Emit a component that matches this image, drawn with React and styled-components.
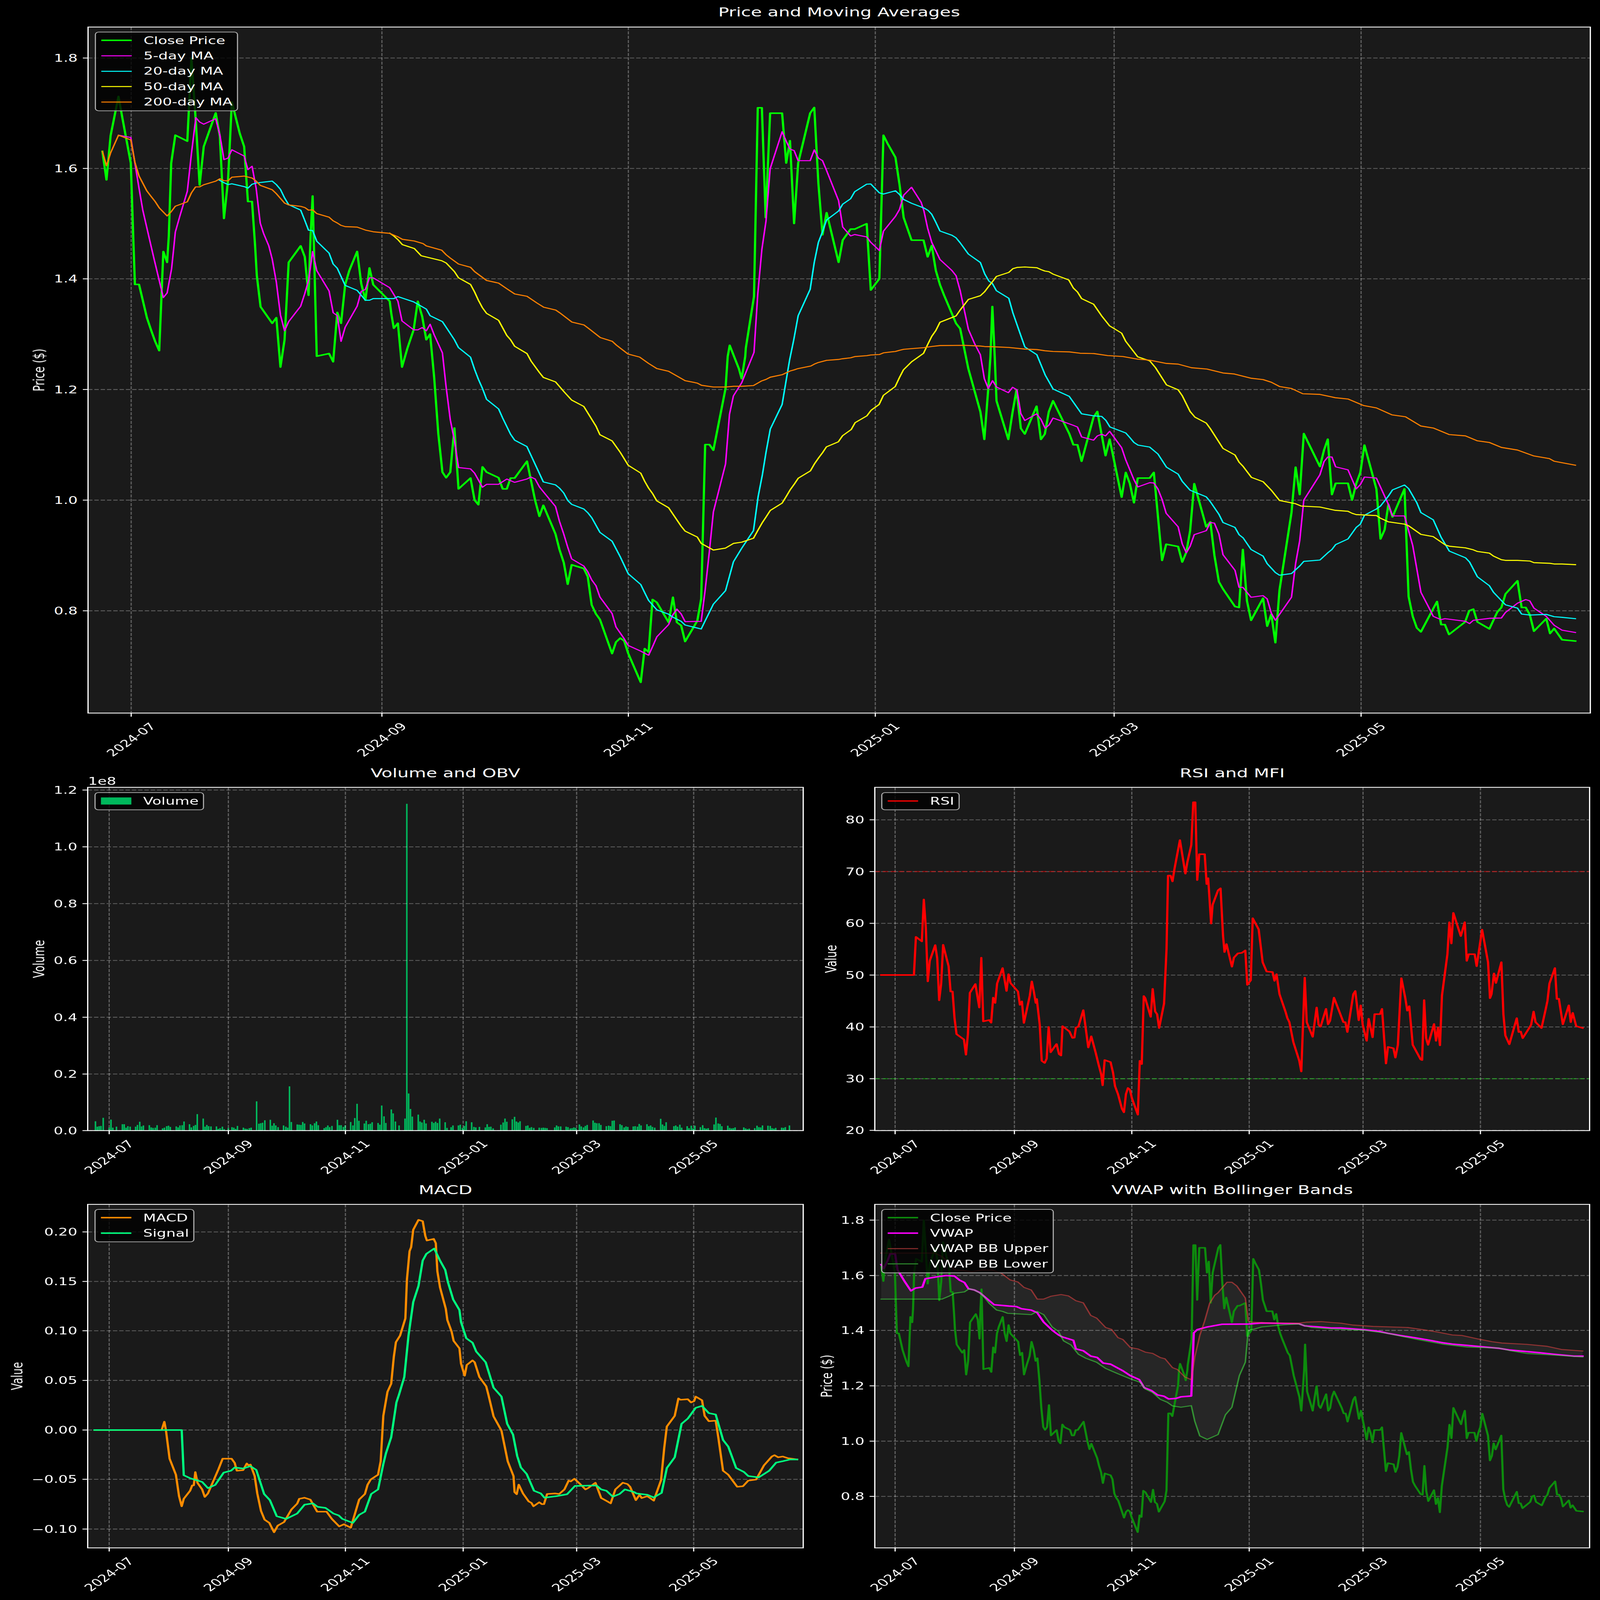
import React, { useLayoutEffect, useState } from "react";
import styled, { createGlobalStyle } from "styled-components";

const GlobalStyle = createGlobalStyle`
  html, body { margin: 0; padding: 0; background: #000; overflow: hidden; }
  body { font-family: "DejaVu Sans", "Liberation Sans", sans-serif; color: #fff; }
`;

const Frame = styled.div`
  width: 100vw;
  height: 100vh;
  overflow: hidden;
  background: #000;
`;
const Page = styled.div`
  width: 4470px;
  height: 6507px;
  display: flex;
  flex-direction: column;
  background: #000;
  transform-origin: 0 0;
`;
const LowerGrid = styled.div`
  display: grid;
  grid-template-columns: 2235px 2235px;
  grid-template-rows: 1700px 1717px;
`;
const Panel = styled.section`
  display: flex;
  flex-direction: column;
  height: ${(p) => p.$height}px;
`;
const Title = styled.h2`
  margin: 0;
  height: ${(p) => p.$height}px;
  line-height: ${(p) => p.$height}px;
  padding-left: ${(p) => p.$shift}px;
  text-align: center;
  font-size: 50px;
  font-weight: 400;
  color: #fff;
  white-space: nowrap;
`;
const Plot = styled.div`
  position: relative;
  flex: 1;
`;
const ChartSvg = styled.svg`
  display: block;
  overflow: visible;
  width: 100%;
  height: 100%;
`;
const AxesFace = styled.rect`
  fill: #1a1a1a;
`;
const AxesFrame = styled.rect`
  fill: none;
  stroke: #fff;
  stroke-width: 3.4;
`;
const GridLine = styled.line`
  stroke: rgba(255, 255, 255, 0.3);
  stroke-width: 3.3;
  stroke-dasharray: 12.3 5.3;
`;
const RefLine = styled.line`
  stroke: ${(p) => p.$color};
  stroke-width: 4.2;
  stroke-dasharray: 15.4 6.7;
`;
const Tick = styled.line`
  stroke: #fff;
  stroke-width: 3.3;
`;
const AxisText = styled.text`
  fill: #fff;
  font-size: 41.67px;
  font-family: "DejaVu Sans", sans-serif;
`;
const Series = styled.polyline`
  fill: none;
  stroke: ${(p) => p.$color};
  stroke-width: ${(p) => p.$width};
  stroke-linejoin: round;
  stroke-linecap: square;
`;
const Band = styled.polygon`
  fill: rgba(255, 255, 255, 0.055);
`;
const VolumeBar = styled.rect`
  fill: #00b85c;
`;
const Legend = styled.div`
  position: absolute;
  left: ${(p) => p.$left}px;
  top: ${(p) => p.$top}px;
  box-sizing: border-box;
  padding: 1px 12px 3px 15px;
  background: rgba(0, 0, 0, 0.8);
  border: 3.4px solid #b3b3b3;
  border-radius: 11px;
`;
const LegendRow = styled.div`
  display: flex;
  align-items: center;
  height: 62.7px;
  gap: 33px;
`;
const LineKey = styled.span`
  width: 85px;
  height: ${(p) => p.$weight}px;
  background: ${(p) => p.$color};
  flex: none;
`;
const PatchKey = styled.span`
  width: 85px;
  height: 29px;
  background: #00b85c;
  flex: none;
`;
const LegendLabel = styled.span`
  font-size: 41.67px;
  line-height: 1;
  color: #fff;
  white-space: nowrap;
`;

/* Trace helper: each traced run is given in the coordinates of a magnified view */
const tiles = {
  A: [0, 0, 1.0453, 1.568],
  B: [1500, 0, 1.0453, 1.0453],
  C: [2970, 1000, 1.0453, 0.7467],
  D: [0, 1000, 1.0453, 0.7467],
  E: [1450, 1450, 1, 1],
  R: [2300, 3100, 0.7226, 0.9224],
  M: [0, 4800, 0.6817, 0.9186],
  V: [2300, 4800, 0.7226, 0.9186],
  W: [245, 4400, 0.784, 3],
};
const trace = (...runs) =>
  runs.flatMap(([tile, text]) => {
    const [ox, oy, sx, sy] = tiles[tile];
    return text
      .trim()
      .split(/\s+/)
      .map((pair) => {
        const [x, y] = pair.split(",").map(Number);
        return [ox + x / sx, oy + y / sy];
      });
  });
const toPoints = (list) => list.map(([x, y]) => `${x.toFixed(1)},${y.toFixed(1)}`).join(" ");

const close = trace(
  ["A", "299,965 311,1147 323,865 346,615 358,760 382,1040 390,1568"],
  ["D", "394,117 406,117 429,218 441,255 453,290 465,318 477,17 488,50 493,-30"],
  ["A", "500,1040 512,862 547,900 559,370 572,780 583,1180 595,935 630,720 642,870 654,1393 666,1150 677,650 700,850 713,935 724,1285 736,1285 745,1568"],
  ["D", "750,90 761,185 795,235 807,218 819,368 831,285 843,50 878,0 890,33 901,150 907,-30"],
  ["A", "913,1250"],
  ["D", "925,335 961,327 973,352 985,202 996,235 1008,118 1020,75 1043,17 1055,115 1067,165 1079,67 1090,118 1138,168 1143,208 1150,250 1162,235 1174,368 1190,310 1208,255 1220,168 1233,215 1245,285 1256,268 1268,400 1280,570 1292,687 1303,704 1315,687 1327,553 1339,738 1374,705 1386,772 1397,786 1409,671 1421,687 1456,704 1468,738 1480,738 1491,705 1503,705 1539,654"],
  ["E", "45,585 57,650 68,605 102,722 113,785 125,838 136,926 147,847 181,862 192,895 203,1010 215,1047 226,1069 260,1208 271,1161 283,1145 294,1157 305,1207 340,1325 351,1188 362,1202 373,988 385,1000 418,1081 430,979 441,1081 453,1094 464,1159 498,1075 509,985 520,358 532,358 543,381 577,130 583,0"],
  ["B", "563,1468 590,1568"],
  ["E", "622,90 632,0"],
  ["B", "610,1480 634,1260 645,458 657,458 668,925 681,481 716,481 728,693 739,598 751,950 763,693 798,481 810,457 822,780 834,998 846,904 881,1115 893,1021 916,974 928,974 963,951 975,1233 1000,1185 1012,575 1024,610 1047,669 1059,785 1071,925 1094,1021 1129,1021 1141,1092 1153,1044 1165,1150 1177,1210 1189,1255 1224,1375 1236,1397 1260,1568"],
  ["E", "1289,225 1300,337 1311,130 1317,0"],
  ["B", "1330,1303"],
  ["E", "1329,0 1334,180 1367,337 1379,225 1390,135 1402,292 1413,315 1446,202 1458,337 1469,315 1480,225 1492,180"],
  ["C", "18,570 30,604 42,604 54,654 89,520 100,503 124,637 136,587 171,763 183,688 195,722 207,780 218,705 253,705 265,688 289,955 301,906 336,913 348,960 360,930 371,865 383,722 418,853 430,838 442,940 455,1020 467,1042 502,1095 514,1098 525,922 537,1078 549,1137 584,1070 596,1155 608,1118 620,1205 632,1045 667,810 679,672 691,755 703,570 750,670 762,620 773,587 785,755 796,721 832,721 844,772 856,722 868,688 880,605 915,738 927,890 939,862 950,785 962,823 997,738 1009,1065 1021,1125 1033,1160 1045,1172 1092,1080 1104,1150 1115,1150 1127,1180 1174,1142 1186,1108 1198,1103 1210,1142 1245,1163 1268,1112 1280,1098 1292,1057 1327,1017 1339,1098 1351,1098 1363,1120 1375,1170 1411,1132 1422,1177 1434,1162 1457,1196 1496,1200"]
);

const ma5 = trace(
  ["A", "346,862 382,877 394,1040 406,1200 417,1340 441,1568"],
  ["D", "450,40 477,157 488,143 501,70 508,0"],
  ["A", "512,1480 525,1380 547,1220 559,980 572,750 583,778 595,792 630,757 642,860 654,1018 666,1008 677,955 713,995 724,1082 736,1060 748,1200 760,1423 770,1490 785,1568"],
  ["D", "795,40 807,110 819,210 831,258 843,230 878,183 890,145 901,105 913,17 925,75 961,137 973,203 985,212 996,290 1008,247 1020,225 1043,183 1055,138 1067,132 1079,97 1090,97 1138,127 1162,168 1174,228 1208,255 1220,255 1233,248 1245,258 1256,238 1268,270 1292,325 1303,430 1315,528 1327,590 1339,673 1374,677 1386,690 1409,733 1421,724 1456,724 1480,708 1503,718"],
  ["E", "22,498 33,490 45,498 57,530 68,550 102,610 113,670 125,722 136,775 147,823 181,852 192,875 203,908 215,932 226,978 260,1045 271,1100 283,1125 294,1148 305,1175 340,1198 362,1215 373,1180 385,1140 418,1090 430,1050 441,1027 453,1047 464,1078 509,1077 520,950 532,790 543,632 577,437 588,235 599,160 622,107"],
  ["B", "634,1498 645,1250 657,1060 669,940 681,718 716,560 728,600 739,634 751,640 763,683 798,683 810,637 822,672 834,683 846,725 881,853 893,965 916,1003 928,997 963,1007 975,1030 1000,1065 1012,983 1047,920 1059,890 1071,830 1094,796 1122,860 1130,895 1141,970 1153,1030 1177,1103 1212,1150 1224,1172 1236,1235 1260,1400 1278,1460 1295,1508"],
  ["E", "1300,90 1311,130 1323,98 1334,124 1367,147 1379,125 1391,135 1402,232 1413,260 1446,233 1458,255 1470,292 1481,278 1492,250"],
  ["C", "30,545 42,550 54,580 89,590 100,577 113,572 124,577 136,563 171,613 183,650 207,710 218,732 253,719 265,720 277,738 289,770 301,812 336,853 348,905 360,932 371,912 383,877 418,865 430,840 442,842 455,875 467,938 502,985 514,1037 525,1037 549,1067 584,1062 596,1072 608,1115 620,1137 667,1067 679,965 691,895 703,772 750,695 762,655 773,641 785,641 796,671 832,680 856,738 868,725 880,702 915,705 950,785 962,820 997,820 1021,910 1045,1052 1069,1100 1081,1125 1104,1135 1115,1132 1175,1140 1187,1147 1198,1137 1245,1131 1280,1130 1292,1113 1327,1085 1351,1074 1363,1078 1375,1100 1411,1125 1434,1152 1457,1167 1496,1174"]
);

const ma20 = trace(
  ["A", "640,1148 654,1165 666,1177 677,1172 713,1190 724,1200 736,1175 748,1167 795,1155 807,1177 819,1208 831,1262 843,1305 878,1340 890,1405 901,1468 913,1470 925,1538"],
  ["D", "961,22 973,55 985,68 1008,120 1043,135 1067,165 1079,165 1090,160 1150,160 1162,154 1208,170 1245,192 1256,212 1292,230 1327,285 1339,309 1374,338 1386,375 1397,405 1409,433 1421,466 1456,495 1468,523 1491,572 1503,590"],
  ["E", "22,366 68,510 102,522 113,535 125,555 136,585 147,601 181,620 192,635 203,655 226,715 260,751 283,815 305,883 340,927 351,960 362,992 385,1030 418,1048 430,1060 453,1077 464,1092 509,1108 520,1075 543,1007 577,952 599,835 622,780 655,708 668,570 680,480 690,390 702,295 735,195"],
  ["B", "738,1530 750,1445 763,1342 773,1310 798,1230 810,1115 822,1030 834,985 846,935 881,897 893,868 916,845 928,815 963,783 975,782 1000,820 1012,825 1047,811 1059,827 1071,848 1094,864 1130,884 1142,894 1153,911 1165,945 1177,982 1212,1000 1224,1011 1236,1032 1260,1080 1295,1116 1308,1165 1320,1195 1330,1205 1342,1236 1378,1268 1390,1330 1402,1380 1414,1430 1425,1475 1460,1508"],
  ["E", "1470,75 1492,132"],
  ["C", "18,457 54,510 89,516 113,518 125,530 137,550 183,568 195,582 207,597 219,605 253,611 277,632 302,672 336,693 348,715 371,742 418,762 430,777 455,815 467,840 502,855 514,877 526,887 549,922 584,942 596,965 620,992 632,1000 667,995 691,972 703,958 750,954 773,932 785,922 796,907 832,890 856,855 868,845 880,818 915,799 927,790 950,760 962,741 997,726 1009,737 1033,780 1045,810 1081,832 1104,885 1128,927 1175,947 1187,960 1210,1005 1245,1032 1257,1052 1292,1090 1327,1100 1339,1118 1363,1121 1411,1119 1434,1126 1457,1128 1496,1132"]
);

const ma50 = trace(
  ["A", "1138,1487 1150,1505 1162,1528 1175,1560"],
  ["D", "1210,8 1230,30 1290,45 1303,52 1327,78 1339,97 1374,117 1386,140 1397,165 1409,188 1421,205 1456,226 1480,272 1491,285 1503,305 1539,327 1551,350"],
  ["E", "57,65 68,85 102,103 125,142 147,177 181,203 215,283 226,318 260,343 283,390 305,442 340,474 351,507 362,535 373,557 385,587 418,615 453,690 464,710 498,734 509,760 543,787 577,779 599,760 622,755 655,739 668,705 679,677 690,653 702,626 735,596 747,568 758,541 769,519 780,495 814,465 826,435 837,412 848,391 859,367 892,347 904,322 928,297 939,269 972,241 984,218 1006,195 1018,158 1051,122 1063,85 1074,54 1097,21"],
  ["B", "1129,1502 1141,1465 1153,1430 1165,1405 1177,1370 1224,1343 1236,1318 1260,1273 1295,1257 1307,1241 1318,1220 1330,1198 1342,1175 1378,1158 1390,1142 1402,1137 1425,1135 1460,1138 1472,1146 1483,1152 1495,1155 1507,1165 1553,1190"],
  ["C", "30,128 42,140 54,160 89,177 113,213 136,243 171,265 183,290 218,337 253,349 270,370 302,422 336,437 348,455 371,503 385,520 418,538 430,555 467,615 502,635 514,657 526,670 550,703 584,716 608,742 632,773 679,783 695,790 750,793 795,803 832,806 844,812 856,816 915,819 927,827 950,838 997,845 1009,850 1045,876 1081,883 1116,908 1128,912 1175,917 1198,923 1210,928 1245,933 1257,942 1280,953 1292,955 1327,955 1363,957 1375,962 1422,964 1434,966 1457,966 1496,968"]
);

const ma200 = trace(
  ["A", "299,965 311,1057 323,975 346,862 382,892 394,1035 406,1122 429,1218 441,1252 453,1285 465,1325 488,1377 500,1350 512,1315 547,1287 559,1230 571,1192 583,1192 595,1178 630,1155 642,1140 654,1152 666,1153 677,1130 713,1123 736,1135 748,1155 760,1182 795,1210 807,1235 819,1265 831,1295 843,1307 878,1316 890,1323 901,1340 913,1338 925,1362 961,1385 973,1408 985,1422 996,1437 1008,1445 1043,1448 1067,1467 1090,1478 1138,1488 1162,1510 1175,1526 1210,1537 1235,1553"],
  ["D", "1245,0 1290,13 1303,27 1315,37 1339,55 1374,65 1386,78 1421,105 1456,113 1480,130 1503,146 1539,153"],
  ["B", "0,1288 20,1306 55,1318 67,1330 102,1369 137,1381 150,1395 172,1420 185,1435 220,1451 232,1467 266,1505 300,1518"],
  ["E", "362,28 385,49 418,60 430,70 464,98 498,108 510,117 543,124 577,124 600,121 622,121 655,118 678,99 690,93 702,84 735,74 757,59 769,54"],
  ["B", "762,1567 800,1556 810,1548 822,1541 846,1532 881,1528 893,1525 916,1521 928,1516 963,1512 975,1509 1000,1507 1012,1500 1047,1494 1059,1489 1071,1485 1094,1482 1130,1478 1153,1473 1177,1469 1248,1468 1295,1471 1307,1473 1330,1474 1378,1477 1425,1484 1460,1486 1483,1491 1507,1494 1555,1496"],
  ["C", "50,326 90,327 130,333 175,336 218,344 253,347 302,357 336,359 375,370 420,374 467,386 500,389 550,402 584,406 608,414 632,427 667,433 700,449 750,451 795,461 832,465 878,485 915,492 960,513 1000,519 1045,547 1081,553 1128,573 1175,577 1210,592 1245,597 1280,612 1327,620 1375,638 1420,646 1434,654 1496,666"]
);

const rsi = trace([
  "R",
  "117,798 183,798 187,655 199,672 203,515 207,620 211,822 215,745 226,686 230,735 234,893 238,830 242,685 253,765 257,860 261,860 265,960 269,1020 284,1040 288,1097 292,1020 296,865 307,832 315,920 319,733 323,972 335,967 339,977 343,883 347,903 351,830 362,772 370,858 374,795 378,828 393,860 397,910 401,897 405,978 417,875 421,822 425,860 429,903 431,888 437,985 441,1120 447,1128 451,1112 455,993 459,1088 471,1057 476,1095 480,1100 483,990 497,1010 503,1034 507,1033 510,995 515,992 525,930 535,1070 541,1028 550,1090 556,1135 561,1170 564,1212 568,1117 580,1125 585,1165 589,1215 595,1245 603,1300 607,1313 611,1245 615,1222 619,1228 623,1260 635,1322 639,1120 643,1132 647,877 650,885 661,955 665,850 670,935 674,945 678,997 688,905 693,700 696,425 701,425 705,447 709,400 720,292 731,418 735,375 743,310 747,150 751,150 755,442 759,345 770,345 774,457 777,435 783,605 786,535 797,480 802,473 807,650 810,712 814,682 825,767 829,733 837,717 845,715 852,706 856,835 863,818 867,585 879,627 887,750 895,785 907,787 911,820 915,795 921,870 933,935 937,960 941,975 949,1050 961,1120 965,1160 972,808 976,975 988,1030 996,920 1000,985 1004,992 1015,925 1019,983 1023,970 1031,883 1050,975 1054,975 1058,1012 1070,870 1074,858 1081,968 1085,912 1089,985 1097,1045 1101,962 1109,1032 1113,945 1124,945 1128,925 1132,1030 1136,1130 1140,1068 1151,1073 1155,1108 1160,1060 1167,810 1175,885 1179,932 1183,915 1190,1060 1206,1115 1209,1117 1213,892 1217,1035 1221,1060 1233,982 1237,1045 1241,995 1245,1062 1249,875 1260,720 1264,600 1268,680 1272,565 1287,652 1295,600 1299,745 1303,720 1315,720 1319,765 1330,628 1342,750 1346,885 1349,870 1354,792 1358,828 1369,750 1373,945 1377,1025 1385,1058 1400,960 1404,1012 1408,1010 1412,1035 1424,1000 1429,985 1434,935 1438,975 1450,997 1458,930 1462,895 1466,830 1477,772 1481,888 1485,887 1493,983 1505,912 1509,975 1513,940 1520,990 1533,997",
]);

const macd = trace([
  "M",
  "180,933 308,933 313,902 316,933 323,1040 335,1100 341,1180 346,1218 350,1190 362,1160 366,1140 369,1140 372,1090 376,1130 385,1155 390,1183 396,1170 416,1080 424,1040 441,1040 447,1056 451,1085 463,1083 470,1058 473,1065 477,1062 485,1105 490,1170 497,1235 504,1268 513,1280 522,1315 529,1290 541,1277 555,1230 566,1208 570,1190 575,1188 580,1186 591,1193 604,1238 622,1238 632,1265 646,1293 655,1285 668,1298 684,1193 695,1172 700,1138 706,1118 720,1100 725,1050 730,880 738,790 745,760 750,660 754,605 762,580 772,516 775,370 780,265 783,250 787,185 797,148 805,153 810,208 813,225 826,219 830,235 833,340 838,400 849,480 852,522 860,565 864,600 875,628 878,685 885,730 889,690 900,673 904,680 913,735 926,770 930,800 940,882 955,935 967,1050 978,1105 980,1165 984,1173 988,1137 996,1170 1007,1200 1012,1205 1016,1218 1027,1203 1032,1210 1036,1210 1042,1172 1057,1170 1065,1172 1075,1155 1083,1122 1087,1125 1094,1115 1105,1135 1115,1155 1120,1150 1134,1130 1145,1187 1157,1200 1163,1207 1172,1155 1186,1130 1195,1135 1200,1145 1211,1195 1218,1175 1222,1187 1233,1180 1245,1197 1259,1120 1265,1000 1270,920 1285,880 1292,815 1296,820 1310,818 1316,830 1322,825 1325,808 1337,822 1342,880 1350,900 1363,898 1368,960 1377,1085 1387,1100 1404,1145 1415,1143 1425,1122 1440,1118 1455,1065 1470,1032 1475,1027 1482,1035 1491,1032 1500,1038 1518,1043",
]);
const signal = trace([
  "M",
  "180,933 346,933 350,1102 362,1113 370,1118 385,1127 396,1150 410,1138 426,1092 440,1085 447,1073 463,1077 477,1068 488,1082 503,1172 514,1195 527,1255 545,1265 566,1245 580,1212 596,1207 605,1220 620,1224 635,1245 645,1252 652,1265 672,1280 684,1250 695,1238 707,1172 720,1155 730,1060 735,1020 745,960 755,830 760,800 770,735 778,580 787,455 797,395 805,300 812,275 827,255 838,300 848,335 853,380 863,445 875,485 878,530 888,590 900,607 907,640 925,680 940,775 955,808 966,910 977,950 985,1030 992,1073 1003,1097 1017,1160 1030,1170 1037,1186 1060,1180 1080,1173 1095,1142 1115,1141 1136,1140 1145,1155 1155,1160 1167,1182 1180,1172 1190,1155 1208,1165 1212,1170 1233,1175 1245,1185 1260,1168 1270,1075 1285,1035 1298,910 1310,890 1325,850 1337,843 1350,870 1363,875 1377,970 1387,995 1402,1075 1417,1090 1425,1105 1445,1110 1465,1085 1478,1055 1490,1050 1505,1043 1518,1043",
]);

const vwap = trace([
  "V",
  "117,315 122,330 130,300 135,275 145,275 150,335 165,380 177,413 186,403 200,399 206,368 232,360 248,356 265,358 275,373 285,382 293,405 305,410 316,420 345,465 375,470 390,472 400,480 420,485 432,495 445,530 462,560 475,578 482,585 505,598 510,630 525,637 540,657 553,662 565,683 580,687 605,712 620,730 638,745 648,775 662,785 675,802 688,807 697,817 712,815 722,809 743,806 748,570 755,558 775,548 790,543 805,538 860,537 885,533 960,536 972,544 1000,548 1025,552 1045,552 1090,558 1120,564 1140,572 1165,580 1200,590 1225,598 1250,607 1270,612 1300,617 1330,622 1365,628 1385,634 1420,640 1450,645 1475,650 1515,657 1533,657",
]);
const bbUpper = trace([
  "V",
  "117,272 225,272 240,285 255,310 265,335 285,338 300,342 320,335 340,335 360,348 377,372 393,380 405,400 420,410 432,444 445,444 460,433 480,427 495,432 510,450 525,458 540,505 552,515 570,550 582,557 595,588 605,595 620,625 635,630 650,642 665,647 680,662 690,667 705,700 715,707 730,735 743,745 750,660 760,580 770,525 780,460 790,430 797,420 815,381 825,381 835,395 852,440 858,525 865,530 900,533 960,534 975,530 1005,528 1030,532 1045,534 1070,541 1110,546 1180,550 1210,558 1240,567 1270,578 1290,580 1320,592 1350,603 1370,608 1420,613 1460,620 1490,632 1533,638",
]);
const bbLower = trace([
  "V",
  "117,444 240,444 255,432 265,422 285,417 295,405 305,410 320,425 335,460 350,485 362,490 372,497 420,502 432,490 445,502 462,548 475,565 485,600 500,615 515,650 530,665 552,680 570,703 595,723 620,742 640,755 650,780 665,793 680,818 695,830 705,843 722,848 743,842 750,900 760,955 775,968 797,950 812,876 825,848 840,730 852,680 858,560 870,556 885,548 930,540 960,537 985,550 1025,555 1090,560 1140,572 1165,582 1200,595 1250,612 1300,623 1365,627 1385,636 1420,647 1475,653 1533,660",
]);
/* close price re-plotted on the VWAP axes */
const closeOnVwap = close.map(([x, y]) => [
  2500.7 + ((x - 366.5) / 11.3) * 5.38,
  6085.6 - ((2484 - y) * 1123.6) / 2249,
]);

/* traded-day volume bars, each as bar centre and top */
const volumes = trace([
  "W",
  "17,480 21,546 25,540 29,537 34,438 47,558 51,460 55,558 63,546 76,516 80,516 84,558 88,540 93,546 105,546 109,525 114,486 118,543 122,531 135,528 139,555 143,561 148,558 152,528 164,567 168,558 173,540 177,534 181,549 194,543 198,555 202,531 207,528 211,483 223,516 227,555 232,537 236,525 240,393 253,447 257,546 261,525 265,540 270,543 282,543 286,573 290,564 295,546 299,576 308,561 316,552 320,558 324,573 328,537 341,558 345,570 349,573 354,564 358,558 370,237 375,510 379,504 383,498 388,468 400,462 404,534 408,504 412,531 417,552 429,531 434,546 438,558 442,54 446,489 459,519 463,522 467,525 471,489 475,507 488,516 492,531 497,504 501,483 505,528 518,564 522,552 526,531 530,552 535,537 547,462 551,528 555,528 560,549 564,531 576,489 581,531 585,441 590,267 594,474 606,507 610,474 615,516 619,510 623,492 636,501 640,522 644,288 649,420 653,501 665,336 669,384 674,483 682,531 695,447 699,-3393 703,141 707,330 711,423 724,399 728,483 732,495 737,462 741,507 754,486 758,501 762,486 766,501 771,447 783,492 787,561 796,552 800,531 812,531 816,522 821,561 825,537 829,480 841,492 846,549 850,555 858,549 871,555 875,516 879,549 883,546 888,567 905,522 910,495 914,447 918,486 930,456 935,426 939,483 943,495 947,480 960,537 964,531 968,561 972,552 977,561 989,558 994,561 998,558 1002,561 1006,564 1023,555 1027,531 1031,543 1036,543 1048,546 1052,552 1057,567 1061,564 1065,555 1069,561 1077,519 1081,543 1086,555 1090,537 1094,525 1107,471 1111,498 1115,504 1120,504 1124,525 1136,540 1141,534 1145,540 1149,474 1153,471 1166,516 1170,528 1175,555 1179,543 1183,549 1195,543 1199,540 1204,546 1208,513 1212,531 1225,516 1229,540 1233,531 1237,549 1242,558 1255,450 1259,519 1263,537 1267,492 1284,540 1288,531 1292,546 1297,522 1301,558 1313,540 1317,564 1322,534 1326,567 1330,534 1342,552 1347,528 1351,564 1355,570 1359,564 1372,519 1376,435 1381,507 1385,513 1389,540 1402,534 1406,561 1410,567 1414,564 1418,555 1437,555 1441,567 1445,576 1449,570 1461,564 1466,534 1470,552 1474,555 1478,531 1490,534 1495,537 1499,564 1503,570 1507,561 1520,558 1524,561 1528,552 1537,531",
]);

const monthsMain = [366.5, 1067, 1755.5, 2445.4, 3112.6, 3802.5];
const monthsLeft = [305, 638, 965, 1294, 1611, 1938];
const monthsRight = [2500.7, 2834, 3162, 3490, 3808, 4136];
const monthNames = ["2024-07", "2024-09", "2024-11", "2025-01", "2025-03", "2025-05"];

const Axes = ({ box, months, yTicks, yLabel, labelDrop, children, backdrop }) => {
  const { l, t, r, b } = box;
  return (
    <>
      <AxesFace x={l} y={t} width={r - l} height={b - t} />
      {backdrop}
      {yTicks.map(([y]) => (
        <GridLine key={y} x1={l} x2={r} y1={y} y2={y} />
      ))}
      {months.map((x) => (
        <GridLine key={x} x1={x} x2={x} y1={t} y2={b} />
      ))}
      {children}
      <AxesFrame x={l} y={t} width={r - l} height={b - t} />
      {yTicks.map(([y, label]) => (
        <g key={label}>
          <Tick x1={l - 14.6} x2={l} y1={y} y2={y} />
          <AxisText x={l - 29} y={y + 15} textAnchor="end">
            {label}
          </AxisText>
        </g>
      ))}
      {months.map((x, i) => (
        <g key={x}>
          <Tick x1={x} x2={x} y1={b} y2={b + 14.6} />
          <AxisText
            x={x}
            y={b + labelDrop}
            textAnchor="middle"
            dominantBaseline="central"
            transform={`rotate(-45 ${x} ${b + labelDrop})`}
          >
            {monthNames[i]}
          </AxisText>
        </g>
      ))}
      <AxisText
        x={yLabel.x}
        y={(t + b) / 2}
        textAnchor="middle"
        dominantBaseline="central"
        transform={`rotate(-90 ${yLabel.x} ${(t + b) / 2})`}
      >
        {yLabel.text}
      </AxisText>
    </>
  );
};

const LegendBox = ({ left, top, items }) => (
  <Legend $left={left} $top={top}>
    {items.map((item) => (
      <LegendRow key={item.label}>
        {item.patch ? <PatchKey /> : <LineKey $color={item.color} $weight={item.weight} />}
        <LegendLabel>{item.label}</LegendLabel>
      </LegendRow>
    ))}
  </Legend>
);

const ChartPanel = ({ x, y, w, h, titleH, title, box, legend, children }) => (
  <Panel $height={h}>
    <Title $height={titleH} $shift={box.l + box.r - 2 * x - w}>
      {title}
    </Title>
    <Plot>
      <ChartSvg viewBox={`${x} ${y + titleH} ${w} ${h - titleH}`}>{children}</ChartSvg>
      {legend}
    </Plot>
  </Panel>
);

const mainBox = { l: 246, t: 110, r: 4443, b: 2900 };
const volBox = { l: 245, t: 3202, r: 2244, b: 4598 };
const rsiBox = { l: 2444, t: 3202, r: 4441, b: 4598 };
const macdBox = { l: 245, t: 4898, r: 2244, b: 6295 };
const vwapBox = { l: 2444, t: 4898, r: 4441, b: 6295 };

/* The page is drawn at the reference's own size and fitted to whatever window it gets */
const useFit = () => {
  const read = () => ({ x: window.innerWidth / 4470, y: window.innerHeight / 6507 });
  const [fit, setFit] = useState(read);
  useLayoutEffect(() => {
    const update = () => setFit(read());
    window.addEventListener("resize", update);
    return () => window.removeEventListener("resize", update);
  }, []);
  return fit;
};

export default function App() {
  const fit = useFit();
  return (
    <Frame>
      <GlobalStyle />
      <Page style={{ transform: `scale(${fit.x}, ${fit.y})` }}>
        <ChartPanel
          x={0}
          y={0}
          w={4470}
          h={3090}
          titleH={100}
          title="Price and Moving Averages"
          box={mainBox}
          legend={
            <LegendBox
              left={265}
              top={29}
              items={[
                { label: "Close Price", color: "#00ff00", weight: 6 },
                { label: "5-day MA", color: "#ff00ff", weight: 4 },
                { label: "20-day MA", color: "#00ffff", weight: 4 },
                { label: "50-day MA", color: "#ffff00", weight: 4 },
                { label: "200-day MA", color: "#ff8000", weight: 4 },
              ]}
            />
          }
        >
          <Axes
            box={mainBox}
            months={monthsMain}
            labelDrop={108}
            yLabel={{ x: 110, text: "Price ($)" }}
            yTicks={[[236, "1.8"], [685, "1.6"], [1134, "1.4"], [1584, "1.2"], [2034, "1.0"], [2484, "0.8"]]}
          >
            <Series points={toPoints(close)} $color="#00ff00" $width={6.2} />
            <Series points={toPoints(ma5)} $color="#ff00ff" $width={4.2} />
            <Series points={toPoints(ma20)} $color="#00ffff" $width={4.2} />
            <Series points={toPoints(ma50)} $color="#ffff00" $width={4.2} />
            <Series points={toPoints(ma200)} $color="#ff8000" $width={4.2} />
          </Axes>
        </ChartPanel>
        <LowerGrid>
          <ChartPanel
            x={0}
            y={3090}
            w={2235}
            h={1700}
            titleH={110}
            title="Volume and OBV"
            box={volBox}
            legend={<LegendBox left={264} top={22} items={[{ label: "Volume", patch: true }]} />}
          >
            <Axes
              box={volBox}
              months={monthsLeft}
              labelDrop={108}
              yLabel={{ x: 110, text: "Volume" }}
              yTicks={[[3213, "1.2"], [3444, "1.0"], [3675, "0.8"], [3906, "0.6"], [4137, "0.4"], [4368, "0.2"], [4598, "0.0"]]}
              backdrop={volumes.map(([x, y]) => (
                <VolumeBar key={x} x={x - 2.15} y={y} width={4.3} height={4598 - y} />
              ))}
            />
            <AxisText x={246} y={3191}>
              1e8
            </AxisText>
          </ChartPanel>
          <ChartPanel
            x={2235}
            y={3090}
            w={2235}
            h={1700}
            titleH={110}
            title="RSI and MFI"
            box={rsiBox}
            legend={<LegendBox left={227} top={22} items={[{ label: "RSI", color: "#ff0000", weight: 5 }]} />}
          >
            <Axes
              box={rsiBox}
              months={monthsRight}
              labelDrop={108}
              yLabel={{ x: 2322, text: "Value" }}
              yTicks={[[3334, "80"], [3544.5, "70"], [3755, "60"], [3965.5, "50"], [4176.5, "40"], [4387, "30"], [4597, "20"]]}
            >
              <RefLine x1={rsiBox.l} x2={rsiBox.r} y1={3544.5} y2={3544.5} $color="rgba(255,0,0,0.5)" />
              <RefLine x1={rsiBox.l} x2={rsiBox.r} y1={4387} y2={4387} $color="rgba(0,255,0,0.4)" />
              <Series points={toPoints(rsi)} $color="#ff0000" $width={6.2} />
            </Axes>
          </ChartPanel>
          <ChartPanel
            x={0}
            y={4790}
            w={2235}
            h={1717}
            titleH={100}
            title="MACD"
            box={macdBox}
            legend={
              <LegendBox
                left={264}
                top={27}
                items={[
                  { label: "MACD", color: "#ff8c00", weight: 6 },
                  { label: "Signal", color: "#00ff7f", weight: 6 },
                ]}
              />
            }
          >
            <Axes
              box={macdBox}
              months={monthsLeft}
              labelDrop={108}
              yLabel={{ x: 48, text: "Value" }}
              yTicks={[[5010, "0.20"], [5211.5, "0.15"], [5412, "0.10"], [5614, "0.05"], [5815.7, "0.00"], [6016, "\u22120.05"], [6218.5, "\u22120.10"]]}
            >
              <Series points={toPoints(macd)} $color="#ff8c00" $width={6.2} />
              <Series points={toPoints(signal)} $color="#00ff7f" $width={6.2} />
            </Axes>
          </ChartPanel>
          <ChartPanel
            x={2235}
            y={4790}
            w={2235}
            h={1717}
            titleH={100}
            title="VWAP with Bollinger Bands"
            box={vwapBox}
            legend={
              <LegendBox
                left={227}
                top={27}
                items={[
                  { label: "Close Price", color: "#0d8c0d", weight: 6 },
                  { label: "VWAP", color: "#ff00ff", weight: 6 },
                  { label: "VWAP BB Upper", color: "#8c2e2e", weight: 4 },
                  { label: "VWAP BB Lower", color: "#2e8c2e", weight: 4 },
                ]}
              />
            }
          >
            <Axes
              box={vwapBox}
              months={monthsRight}
              labelDrop={108}
              yLabel={{ x: 2310, text: "Price ($)" }}
              yTicks={[[4962, "1.8"], [5187.5, "1.6"], [5410.7, "1.4"], [5636, "1.2"], [5861, "1.0"], [6085.6, "0.8"]]}
              backdrop={<Band points={toPoints([...bbUpper, ...[...bbLower].reverse()])} />}
            >
              <Series points={toPoints(closeOnVwap)} $color="#0d8c0d" $width={6} />
              <Series points={toPoints(vwap)} $color="#ff00ff" $width={6.2} />
              <Series points={toPoints(bbUpper)} $color="rgba(255,70,70,0.5)" $width={4.2} />
              <Series points={toPoints(bbLower)} $color="rgba(70,255,70,0.5)" $width={4.2} />
            </Axes>
          </ChartPanel>
        </LowerGrid>
      </Page>
    </Frame>
  );
}
